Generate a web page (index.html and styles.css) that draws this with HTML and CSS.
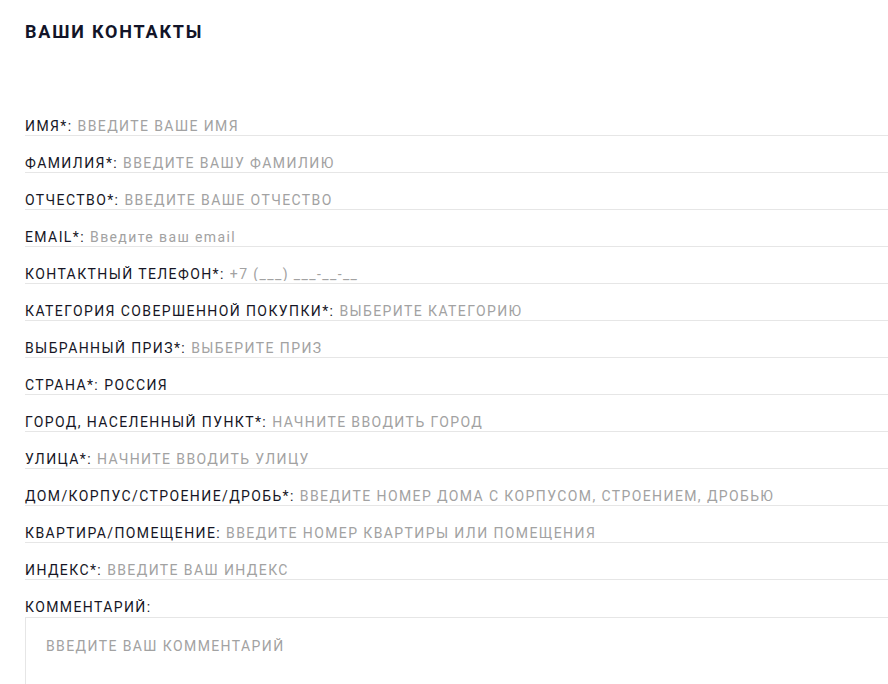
FILE: index.html
```html
<!DOCTYPE html>
<html lang="ru">
<head>
<meta charset="utf-8">
<title>Ваши контакты</title>
<link rel="stylesheet" href="styles.css">
</head>
<body>
<div class="page">
  <h1 class="title">ВАШИ КОНТАКТЫ</h1>
  <form class="form">
    <label class="row"><span class="label">ИМЯ*:</span><input class="field" type="text" placeholder="ВВЕДИТЕ ВАШЕ ИМЯ"></label>
    <label class="row"><span class="label">ФАМИЛИЯ*:</span><input class="field" type="text" placeholder="ВВЕДИТЕ ВАШУ ФАМИЛИЮ"></label>
    <label class="row"><span class="label">ОТЧЕСТВО*:</span><input class="field" type="text" placeholder="ВВЕДИТЕ ВАШЕ ОТЧЕСТВО"></label>
    <label class="row"><span class="label">EMAIL*:</span><input class="field" type="text" placeholder="Введите ваш email"></label>
    <label class="row"><span class="label">КОНТАКТНЫЙ ТЕЛЕФОН*:</span><input class="field" type="text" placeholder="+7 (___) ___-__-__"></label>
    <label class="row"><span class="label">КАТЕГОРИЯ СОВЕРШЕННОЙ ПОКУПКИ*:</span><input class="field" type="text" placeholder="ВЫБЕРИТЕ КАТЕГОРИЮ"></label>
    <label class="row"><span class="label">ВЫБРАННЫЙ ПРИЗ*:</span><input class="field" type="text" placeholder="ВЫБЕРИТЕ ПРИЗ"></label>
    <label class="row"><span class="label">СТРАНА*:</span><input class="field" type="text" value="РОССИЯ"></label>
    <label class="row"><span class="label">ГОРОД, НАСЕЛЕННЫЙ ПУНКТ*:</span><input class="field" type="text" placeholder="НАЧНИТЕ ВВОДИТЬ ГОРОД"></label>
    <label class="row"><span class="label">УЛИЦА*:</span><input class="field" type="text" placeholder="НАЧНИТЕ ВВОДИТЬ УЛИЦУ"></label>
    <label class="row"><span class="label">ДОМ/КОРПУС/СТРОЕНИЕ/ДРОБЬ*:</span><input class="field" type="text" placeholder="ВВЕДИТЕ НОМЕР ДОМА С КОРПУСОМ, СТРОЕНИЕМ, ДРОБЬЮ"></label>
    <label class="row"><span class="label">КВАРТИРА/ПОМЕЩЕНИЕ:</span><input class="field" type="text" placeholder="ВВЕДИТЕ НОМЕР КВАРТИРЫ ИЛИ ПОМЕЩЕНИЯ"></label>
    <label class="row"><span class="label">ИНДЕКС*:</span><input class="field" type="text" placeholder="ВВЕДИТЕ ВАШ ИНДЕКС"></label>
    <div class="comment">
      <label class="comment-label" for="comment">КОММЕНТАРИЙ:</label>
      <textarea id="comment" class="comment-box" placeholder="ВВЕДИТЕ ВАШ КОММЕНТАРИЙ"></textarea>
    </div>
  </form>
</div>
</body>
</html>
```

FILE: styles.css
```css
html, body {
  margin: 0;
  padding: 0;
  background: #ffffff;
}

body {
  font-family: Roboto, "Noto Sans", "Liberation Sans", sans-serif;
  color: #161625;
  overflow: hidden;
}

.page {
  padding: 20px 0 0 25px;
}

.title {
  margin: 0;
  font-size: 18px;
  line-height: 23px;
  font-weight: 700;
  letter-spacing: 1.8px;
  color: #121428;
}

.form {
  margin-top: 56px;
  display: flex;
  flex-direction: column;
}

.row {
  display: flex;
  align-items: flex-end;
  gap: 5px;
  padding-top: 20px;
  padding-bottom: 2px;
  border-bottom: 1px solid #e6e6e6;
  font-size: 14px;
  line-height: 14px;
  letter-spacing: 1.4px;
}

.label {
  white-space: nowrap;
  color: #161625;
}

.field {
  flex: 1;
  min-width: 0;
  border: none;
  outline: none;
  background: transparent;
  padding: 0;
  margin: 0;
  height: 14px;
  font: inherit;
  letter-spacing: 1.4px;
  color: #161625;
}

.field::placeholder {
  color: #a2a2a2;
  opacity: 1;
}

.comment {
  display: flex;
  flex-direction: column;
}

.comment-label {
  padding-top: 20px;
  padding-bottom: 2px;
  margin-bottom: 1px;
  font-size: 14px;
  line-height: 14px;
  letter-spacing: 1.4px;
  color: #161625;
}

.comment-box {
  display: block;
  box-sizing: border-box;
  width: 100%;
  height: 130px;
  margin: 0;
  padding: 18px 20px;
  border: 1px solid #e6e6e6;
  border-right: none;
  resize: none;
  outline: none;
  font-family: inherit;
  font-size: 14px;
  line-height: 20px;
  letter-spacing: 1.4px;
  color: #161625;
}

.comment-box::placeholder {
  color: #a2a2a2;
  opacity: 1;
}
```
